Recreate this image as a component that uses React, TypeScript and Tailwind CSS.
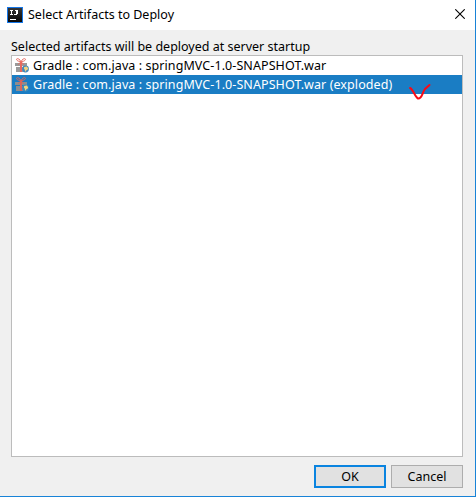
import React from "react";

function AppIcon() {
  return (
    <svg width="16" height="16" viewBox="0 0 16 16" shapeRendering="crispEdges">
      <defs>
        <linearGradient id="ij" x1="0" y1="0" x2="0" y2="1">
          <stop offset="0" stopColor="#353535" />
          <stop offset="1" stopColor="#080808" />
        </linearGradient>
      </defs>
      <rect width="16" height="16" fill="#1677e8" />
      <rect x="1" y="1" width="14" height="14" fill="url(#ij)" />
      <path d="M3 3h3v1H5v3h1v1H3V7h1V4H3zM8 3h3v4h-1v1H7V7h2V4H8zM3 12h6v1H3z" fill="#fff" />
    </svg>
  );
}

function GiftIcon({ selected = false }: { selected?: boolean }) {
  const box = selected ? "#8c8e90" : "#9a9a9a";
  const ribbon = selected ? "#d9655b" : "#e8695e";
  return (
    <svg className="shrink-0" width="15" height="17" viewBox="0 0 15 17">
      <path d="M1 6h12v3H1zM2 10h10v5H2z" fill={box} shapeRendering="crispEdges" />
      <path d="M6 5h2v10H6z" fill={ribbon} />
      <path d="M7 4.800C6 2.200 3.500 1 2.600 2 2 3.200 4.500 4.600 7 4.800zM7 4.800c1-2.600 3.500-3.800 4.400-2.800.6 1.200-1.900 2.600-4.400 2.800zM7 4.800L4 7.500M7 4.800l3 2.700" fill="none" stroke={ribbon} strokeWidth="1" />
      <circle cx="11.500" cy="12" r="3.400" fill={selected ? "#3b88bd" : "#4388bd"} />
      <path d="M10.200 10l2.600-.5 1.300 1.700-.5 1.600-1.200.3-.4 1.500-1-.3-.2-1.500-.9-1.200z" fill="#f4d47c" />
    </svg>
  );
}

function Row({ label, selected = false }: { label: string; selected?: boolean }) {
  return (
    <div className={`flex h-[19px] items-center pl-[2px] ${selected ? "bg-[#1a7dc4] text-white" : ""}`}>
      <GiftIcon selected={selected} />
      <span className="ml-[4px] leading-[19px] tracking-[0.08px]">{label}</span>
    </div>
  );
}

export default function App() {
  return (
    <div className="relative flex h-[497px] w-[476px] flex-col overflow-hidden border-r border-b border-[#1883d7] bg-[#f0f0f0] font-['Noto_Sans',sans-serif] text-[12.5px] whitespace-nowrap text-black">
      <header className="flex h-[30px] shrink-0 items-center bg-white pl-[7px]">
        <AppIcon />
        <h1 className="ml-[5px] text-[12.5px] leading-[18px]">Select Artifacts to Deploy</h1>
        <button className="mr-[10px] mb-[2px] ml-auto" aria-label="Close">
          <svg width="10" height="10" viewBox="0 0 10 10">
            <path d="M.3.3l9.400 9.400M9.700.3L.3 9.700" stroke="#000" strokeWidth="1.100" />
          </svg>
        </button>
      </header>
      <main className="flex flex-1 flex-col px-[11px] pt-[7px]">
        <p className="h-[18px] leading-[19px]">Selected artifacts will be deployed at server startup</p>
        <div className="h-[402px] w-[452px] border border-[#bcbcbc] bg-white">
          <Row label="Gradle : com.java : springMVC-1.0-SNAPSHOT.war" />
          <Row label="Gradle : com.java : springMVC-1.0-SNAPSHOT.war (exploded)" selected />
        </div>
        <div className="mt-2 flex w-[452px] justify-end gap-[5px]">
          <button className="h-[23px] w-[72px] border-2 border-[#0a84e0] bg-[#e1e1e1] leading-[19px]">OK</button>
          <button className="h-[23px] w-[72px] border border-[#adadad] bg-[#e1e1e1] leading-[21px]">Cancel</button>
        </div>
      </main>
      <svg className="absolute top-[82px] left-[408px]" width="24" height="20" viewBox="0 0 24 20">
        <path d="M2 6C5 7 7 15 10 16.500C14 17 14 11 17 7L21.500 3" fill="none" stroke="#fa0a14" strokeWidth="2" strokeLinecap="round" />
      </svg>
    </div>
  );
}
